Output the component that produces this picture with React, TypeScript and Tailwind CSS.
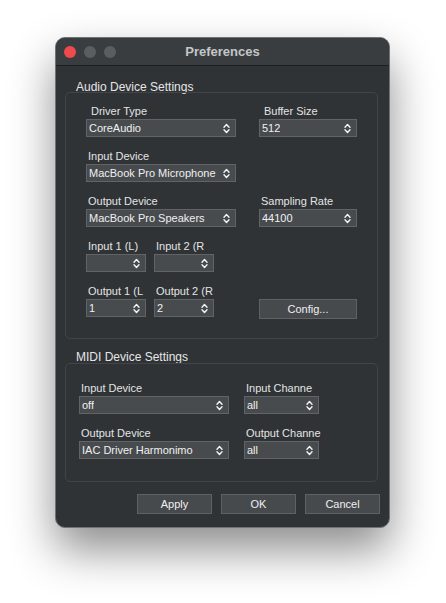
import type { ReactNode } from "react";

const font = { fontFamily: '"Liberation Sans", Arial, sans-serif' };

// up/down chevrons shown at the right end of a combo box
const Chevrons = () => (
  <svg width="7" height="11" viewBox="0 0 7 11" fill="none" className="shrink-0">
    <path d="M1 4.2 L3.5 1.6 L6 4.2" stroke="#f4f4f4" strokeWidth="1.4" strokeLinecap="round" strokeLinejoin="round" />
    <path d="M1 6.8 L3.5 9.4 L6 6.8" stroke="#f4f4f4" strokeWidth="1.4" strokeLinecap="round" strokeLinejoin="round" />
  </svg>
);

const Combo = ({ value, width }: { value: string; width: string }) => (
  <div
    className={`${width} h-[18px] flex items-center justify-between pl-[2px] pr-[5px] bg-[#474b4e] border border-[#606467] text-[11px] text-[#f0f0f0] leading-none`}
  >
    <span className="truncate">{value}</span>
    <Chevrons />
  </div>
);

const Field = ({
  label,
  value,
  width,
  indent = "ml-[2px]",
}: {
  label: string;
  value: string;
  width: string;
  indent?: string;
}) => (
  <div className={`flex flex-col gap-[1px] ${width}`}>
    <div className={`h-[14px] leading-[14px] text-[11px] text-[#e4e4e4] whitespace-nowrap ${indent}`}>
      {label}
    </div>
    <Combo value={value} width={width} />
  </div>
);

const Button = ({ children, width = "w-[75px]", height = "h-[20px]" }: { children: ReactNode; width?: string; height?: string }) => (
  <div
    className={`${width} ${height} flex items-center justify-center bg-[#464a4d] border border-[#5e6265] text-[11px] text-[#f0f0f0]`}
  >
    {children}
  </div>
);

const GroupTitle = ({ children }: { children: ReactNode }) => (
  <div className="h-[11px] leading-[12px] ml-[20px] text-[12px] text-[#e6e6e6] whitespace-nowrap">{children}</div>
);

export default function App() {
  return (
    <div className="w-[446px] h-[603px] bg-white overflow-hidden pt-[37px] pl-[55px]" style={font}>
      <div className="w-[335px] h-[491px] flex flex-col rounded-[10px] border border-[#6f7376] bg-[#2f3336] overflow-hidden shadow-[0_22px_45px_rgba(0,0,0,0.45)]">
        {/* title bar */}
        <div className="relative h-[28px] flex items-center bg-[#3a3d40] border-b border-[#1c1e20] shrink-0">
          <div className="flex gap-[8px] ml-[8px]">
            <span className="w-[12px] h-[12px] rounded-full bg-[#ef4a4c]" />
            <span className="w-[12px] h-[12px] rounded-full bg-[#5b5e61]" />
            <span className="w-[12px] h-[12px] rounded-full bg-[#5b5e61]" />
          </div>
          <div className="absolute inset-0 flex items-center justify-center text-[13px] font-bold text-[#c4c6c8] pointer-events-none">
            Preferences
          </div>
        </div>

        <div className="flex flex-col pt-[15px]">
          <GroupTitle>Audio Device Settings</GroupTitle>
          <div className="ml-[9px] w-[313px] h-[247px] border border-[#414548] rounded-[5px] pt-[11px] pl-[20px] flex flex-col gap-[12px]">
            <div className="flex gap-[23px]">
              <Field label="Driver Type" value="CoreAudio" width="w-[150px]" indent="ml-[5px]" />
              <Field label="Buffer Size" value="512" width="w-[98px]" indent="ml-[5px]" />
            </div>
            <div className="flex gap-[23px]">
              <Field label="Input Device" value="MacBook Pro Microphone" width="w-[150px]" />
            </div>
            <div className="flex gap-[23px]">
              <Field label="Output Device" value="MacBook Pro Speakers" width="w-[150px]" />
              <Field label="Sampling Rate" value="44100" width="w-[98px]" />
            </div>
            <div className="flex gap-[8px]">
              <Field label="Input 1 (L)" value="" width="w-[60px]" />
              <Field label="Input 2 (R" value="" width="w-[60px]" />
            </div>
            <div className="flex">
              <div className="flex gap-[8px] w-[150px]">
                <Field label="Output 1 (L" value="1" width="w-[60px]" />
                <Field label="Output 2 (R" value="2" width="w-[60px]" />
              </div>
              <div className="ml-[23px] pt-[15px]">
                <Button width="w-[98px]">Config...</Button>
              </div>
            </div>
          </div>

          <div className="mt-[12px]">
            <GroupTitle>MIDI Device Settings</GroupTitle>
          </div>
          <div className="mt-[1px] ml-[9px] w-[313px] h-[119px] border border-[#414548] rounded-[5px] pt-[17px] pl-[13px] flex flex-col gap-[12px]">
            <div className="flex gap-[15px]">
              <Field label="Input Device" value="off" width="w-[150px]" />
              <Field label="Input Channe" value="all" width="w-[75px]" />
            </div>
            <div className="flex gap-[15px]">
              <Field label="Output Device" value="IAC Driver Harmonimo" width="w-[150px]" />
              <Field label="Output Channe" value="all" width="w-[75px]" />
            </div>
          </div>

          <div className="mt-[12px] flex justify-end gap-[9px] pr-[9px]">
            <Button>Apply</Button>
            <Button>OK</Button>
            <Button>Cancel</Button>
          </div>
        </div>
      </div>
    </div>
  );
}
